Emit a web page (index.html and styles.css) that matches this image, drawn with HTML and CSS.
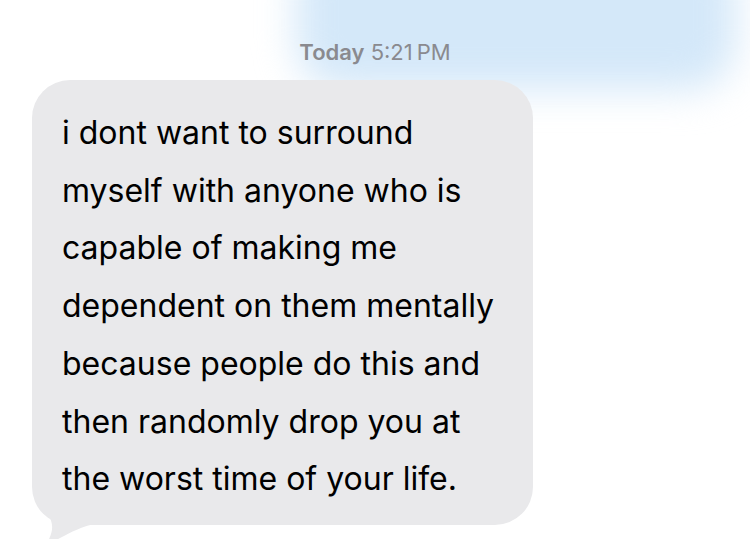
FILE: index.html
```html
<!DOCTYPE html>
<html lang="en">
<head>
<meta charset="utf-8">
<title>Messages</title>
<link rel="stylesheet" href="styles.css">
</head>
<body>
<div class="screen">
  <div class="sent-blur"></div>
  <div class="stamp"><span class="day">Today</span> 5:21&#8239;PM</div>
  <div class="bubble">
    <p class="msg">i dont want to surround<br>myself with anyone who is<br>capable of making me<br>dependent on them mentally<br>because people do this and<br>then randomly drop you at<br>the worst time of your life.</p>
    <svg class="tail" width="64" height="34" viewBox="0 0 64 34" aria-hidden="true"><path d="M6 9 C10 18 8 25 3 34 C15 32 26 21 48 15.5 L48 0 L6 0 Z" fill="#e9e9eb"/></svg>
  </div>
</div>
</body>
</html>
```
FILE: styles.css
```css
html, body {
  margin: 0;
  padding: 0;
  background: #ffffff;
  overflow: hidden;
}

.screen {
  position: relative;
  width: 750px;
  height: 539px;
  padding-top: 40px;
  box-sizing: border-box;
  font-family: Inter, "Liberation Sans", sans-serif;
}

.sent-blur {
  position: absolute;
  top: -60px;
  left: 296px;
  width: 440px;
  height: 150px;
  border-radius: 48px;
  background: #d4e8f9;
  filter: blur(19px);
}

.stamp {
  position: relative;
  text-align: center;
  font-size: 22px;
  line-height: 24px;
  color: #8a8a8f;
}

.day {
  font-weight: 600;
}

.bubble {
  position: relative;
  margin: 16px 0 0 32px;
  width: 501px;
  box-sizing: border-box;
  padding: 24px 30px 17px;
  background: #e9e9eb;
  border-radius: 38px;
}

.msg {
  margin: 0;
  font-size: 32px;
  line-height: 57.7px;
  color: #000000;
}

.tail {
  position: absolute;
  left: 12px;
  bottom: -18px;
  display: block;
}
```
